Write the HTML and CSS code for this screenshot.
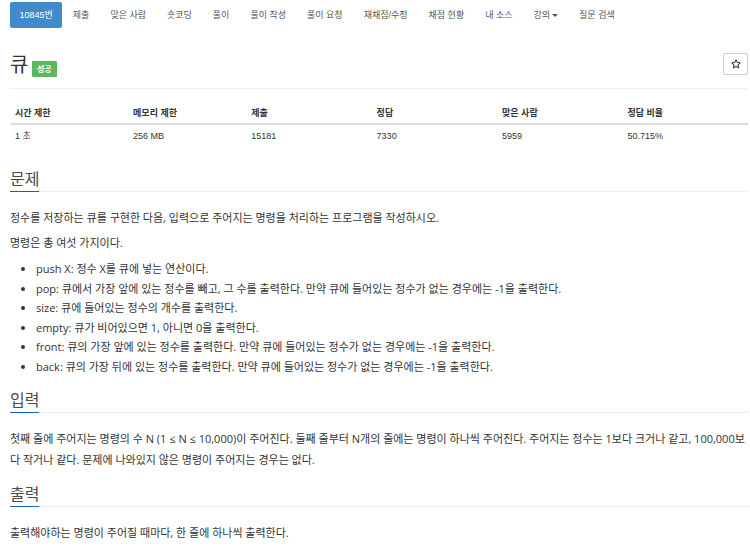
FILE: index.html
```html
<!DOCTYPE html>
<html>

<head>
    <meta http-equiv="Content-Type" content="text/html; charset=utf-8" />
    <link rel="stylesheet" href="styles.css">
</head>

<body>

    <div class="container">
        <ul class="Problem-Menu">
            <li class="active"><a href="#">10845번</a></li>
            <li><a href="#">제출</a></li>
            <li><a href="#">맞은 사람</a></li>
            <li><a href="#">숏코딩</a></li>
            <li><a href="#">풀이</a></li>
            <li><a href="#">풀이 작성</a></li>
            <li><a href="#">풀이 요청</a></li>
            <li><a href="#">재채점/수정</a></li>
            <li><a href="#">채점 현황</a></li>
            <li><a href="#">내 소스</a></li>
            <li><a href="#">강의<span class="caret"></span></a></li>
            <li><a href="#">질문 검색</a></li>
        </ul>

        <div class="Page-Header">
            <h1 class="Problem-Title">큐 <span class="Result-Label">성공</span></h1>
            <button class="Star-Button" title="즐겨찾기">
                <svg width="10" height="10" viewBox="0 0 20 20">
                    <path d="M10 1.5l2.6 5.6 6 .7-4.5 4.1 1.2 6-5.3-3-5.3 3 1.2-6L1.4 7.8l6-.7z" fill="none" stroke="#222" stroke-width="2" stroke-linejoin="round" />
                </svg>
            </button>
        </div>

        <table class="Problem-Info">
            <thead>
                <tr>
                    <th class="narrow">시간 제한</th>
                    <th class="narrow">메모리 제한</th>
                    <th>제출</th>
                    <th>정답</th>
                    <th>맞은 사람</th>
                    <th>정답 비율</th>
                </tr>
            </thead>
            <tbody>
                <tr>
                    <td>1 초</td>
                    <td>256 MB</td>
                    <td>15181</td>
                    <td>7330</td>
                    <td>5959</td>
                    <td>50.715%</td>
                </tr>
            </tbody>
        </table>

        <section class="Problem-Section">
            <div class="headline">
                <h2>문제</h2>
            </div>
            <div class="problem-text">
                <p>정수를 저장하는 큐를 구현한 다음, 입력으로 주어지는 명령을 처리하는 프로그램을 작성하시오.</p>
                <p>명령은 총 여섯 가지이다.</p>
                <ul>
                    <li>push X: 정수 X를 큐에 넣는 연산이다.</li>
                    <li>pop: 큐에서 가장 앞에 있는 정수를 빼고, 그 수를 출력한다. 만약 큐에 들어있는 정수가 없는 경우에는 -1을 출력한다.</li>
                    <li>size: 큐에 들어있는 정수의 개수를 출력한다.</li>
                    <li>empty: 큐가 비어있으면 1, 아니면 0을 출력한다.</li>
                    <li>front: 큐의 가장 앞에 있는 정수를 출력한다. 만약 큐에 들어있는 정수가 없는 경우에는 -1을 출력한다.</li>
                    <li>back: 큐의 가장 뒤에 있는 정수를 출력한다. 만약 큐에 들어있는 정수가 없는 경우에는 -1을 출력한다.</li>
                </ul>
            </div>
        </section>

        <section class="Problem-Section">
            <div class="headline">
                <h2>입력</h2>
            </div>
            <div class="problem-text">
                <p>첫째 줄에 주어지는 명령의 수 N (1 ≤ N ≤ 10,000)이 주어진다. 둘째 줄부터 N개의 줄에는 명령이 하나씩 주어진다. 주어지는 정수는 1보다 크거나 같고, 100,000보다 작거나 같다. 문제에 나와있지 않은 명령이 주어지는 경우는 없다.</p>
            </div>
        </section>

        <section class="Problem-Section">
            <div class="headline">
                <h2>출력</h2>
            </div>
            <div class="problem-text">
                <p>출력해야하는 명령이 주어질 때마다, 한 줄에 하나씩 출력한다.</p>
            </div>
        </section>
    </div>

</body>

</html>
```

FILE: styles.css
```css
body {
    margin: 0;
    background-color: #ffffff;
    color: #333333;
    font-family: "Liberation Sans", "Noto Sans CJK KR", sans-serif;
    font-size: 9px;
}

.container {
    padding: 2px 2px 0 10px;
}

/* Top menu */
.Problem-Menu {
    display: flex;
    margin: 0;
    padding: 0;
    list-style: none;
}

.Problem-Menu a {
    display: block;
    padding: 0 10.5px;
    line-height: 26px;
    font-size: 9px;
    color: #555555;
    text-decoration: none;
}

.Problem-Menu .active a {
    background-color: #428bca;
    color: #ffffff;
    border-radius: 2px;
    padding: 0 9.5px;
}

.caret {
    display: inline-block;
    margin-left: 2px;
    vertical-align: middle;
    border-top: 3px solid #555555;
    border-left: 3px solid transparent;
    border-right: 3px solid transparent;
}

/* Title row */
.Page-Header {
    display: flex;
    justify-content: space-between;
    align-items: center;
    margin-top: 25px;
    padding-bottom: 13px;
    border-bottom: 1px solid #eeeeee;
}

.Problem-Title {
    height: 22px;
    margin: 0;
    font-family: "Noto Sans CJK KR", sans-serif;
    font-size: 20px;
    font-weight: normal;
    line-height: 22px;
    color: #333333;
}

.Result-Label {
    display: inline-block;
    margin-left: -1px;
    padding: 0 5px;
    background-color: #5cb85c;
    color: #ffffff;
    font-size: 8px;
    font-weight: bold;
    line-height: 16px;
    border-radius: 1px;
    vertical-align: 0;
}

.Star-Button {
    display: flex;
    align-items: center;
    justify-content: center;
    width: 25px;
    height: 22px;
    padding: 0;
    background-color: #ffffff;
    border: 1px solid #cccccc;
    border-radius: 2px;
}

/* Limits table */
.Problem-Info {
    width: 100%;
    margin: 11px 0 20px;
    border-collapse: collapse;
}

.Problem-Info th {
    width: 17%;
    padding: 6px 5px 3px;
    line-height: 14px;
    text-align: left;
    font-weight: bold;
    border-bottom: 2px solid #dddddd;
}

.Problem-Info th.narrow {
    width: 16%;
}

.Problem-Info td {
    padding: 4px 5px 5px;
    line-height: 14px;
}

/* Sections */
.headline {
    border-bottom: 1px dotted #dddddd;
}

.headline h2 {
    display: inline-block;
    margin: 0 0 -1px;
    padding-bottom: 3px;
    font-family: "Noto Sans CJK KR", sans-serif;
    font-size: 16px;
    font-weight: normal;
    line-height: 20px;
    color: #4a4a4a;
    border-bottom: 1px solid #1565b4;
}

.problem-text {
    margin: 15px 0 13px;
    font-family: "Open Sans", "Liberation Sans", "Noto Sans CJK KR", sans-serif;
    font-size: 11px;
}

.problem-text p {
    margin: 0 0 4px;
    line-height: 21px;
}

.problem-text ul {
    margin: 6px 0 0;
    padding-left: 26px;
}

.problem-text li {
    line-height: 19.5px;
}
```
